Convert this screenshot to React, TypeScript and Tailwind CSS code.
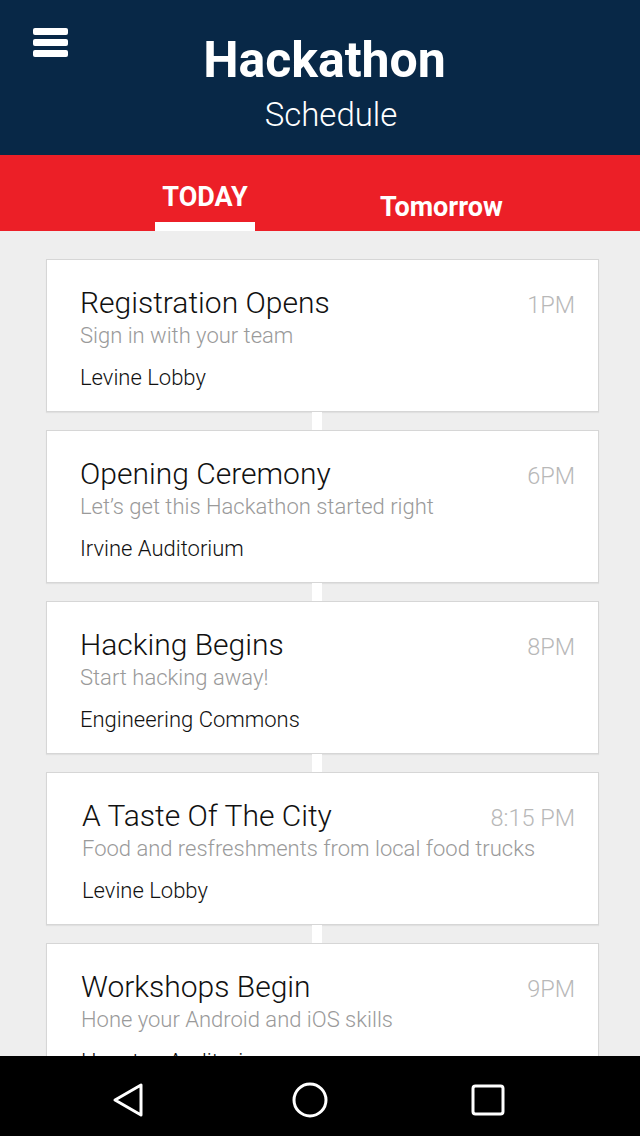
import React from "react";

const events = [
  { title: "Registration Opens", sub: "Sign in with your team", loc: "Levine Lobby", time: "1PM", pl: "pl-[33px]" },
  { title: "Opening Ceremony", sub: "Let\u2019s get this Hackathon started right", loc: "Irvine Auditorium", time: "6PM", pl: "pl-[33px]" },
  { title: "Hacking Begins", sub: "Start hacking away!", loc: "Engineering Commons", time: "8PM", pl: "pl-[33px]" },
  { title: "A Taste Of The City", sub: "Food and resfreshments from local food trucks", loc: "Levine Lobby", time: "8:15 PM", pl: "pl-[35px]" },
  { title: "Workshops Begin", sub: "Hone your Android and iOS skills", loc: "Houston Auditorium", time: "9PM", pl: "pl-[34px]" },
];

export default function App() {
  return (
    <div
      className="w-[640px] h-[1136px] overflow-hidden flex flex-col bg-[#eeeeee]"
      style={{ fontFamily: "Roboto, 'Noto Sans', sans-serif" }}
    >
      {/* Header */}
      <div className="relative h-[155px] shrink-0 bg-[#082847] flex flex-col items-center pt-[35px] text-white">
        <div className="absolute left-[33px] top-[28px] flex flex-col gap-[4px]">
          <div className="w-[35px] h-[7px] rounded-[2px] bg-white" />
          <div className="w-[35px] h-[7px] rounded-[2px] bg-white" />
          <div className="w-[35px] h-[7px] rounded-[2px] bg-white" />
        </div>
        <div className="text-[50px] leading-[50px] font-bold ml-[9px]">Hackathon</div>
        <div className="text-[33px] leading-[32px] font-light mt-[14px] ml-[22px]">Schedule</div>
      </div>

      {/* Tabs */}
      <div className="h-[76px] shrink-0 bg-[#ec1f27] flex flex-row items-start pl-[155px] text-white">
        <div className="w-[100px] h-[76px] flex flex-col items-center pt-[29px]">
          <div className="text-[27px] leading-[27px] font-bold">TODAY</div>
          <div className="mt-auto w-[100px] h-[9px] bg-white" />
        </div>
        <div className="ml-[125px] mt-[39px] text-[27px] leading-[27px] font-bold">Tomorrow</div>
      </div>

      {/* List */}
      <div className="flex-1 overflow-hidden pt-[28px] pl-[46px] pr-[41px]">
        <div className="flex flex-col">
          {events.map((e, i) => (
            <div key={i} className="flex flex-col">
              {i > 0 && (
                <div className="h-[18px] flex justify-center">
                  <div className="w-[10px] h-full bg-white ml-[-11px]" />
                </div>
              )}
              <div
                className={`h-[153px] bg-white border border-[#d6d6d6] shadow-[0_1px_1px_rgba(0,0,0,0.06)] ${e.pl} pr-[23px] pt-[26px] flex flex-col`}
              >
                <div className="flex flex-row justify-between items-baseline">
                  <div className="text-[30px] leading-[34px] font-light text-[#111]">{e.title}</div>
                  <div className="text-[23.5px] leading-[34px] font-light text-[#b8b8b8]">{e.time}</div>
                </div>
                <div className="text-[22px] leading-[26px] font-light text-[#9a9a9a] mt-[1px]">{e.sub}</div>
                <div className="text-[22px] leading-[26px] font-light text-[#111] mt-[16px]">{e.loc}</div>
              </div>
            </div>
          ))}
        </div>
      </div>

      {/* Nav bar */}
      <div className="h-[80px] shrink-0 bg-black flex flex-row items-center">
        <svg width="640" height="80" viewBox="0 0 640 80">
          <polygon
            points="115,44 141,29 141,59"
            fill="none"
            stroke="white"
            strokeWidth="3"
            strokeLinejoin="round"
          />
          <circle cx="310" cy="44" r="16" fill="none" stroke="white" strokeWidth="3" />
          <rect x="473" y="30" width="30" height="28" rx="2.5" fill="none" stroke="white" strokeWidth="3" />
        </svg>
      </div>
    </div>
  );
}
